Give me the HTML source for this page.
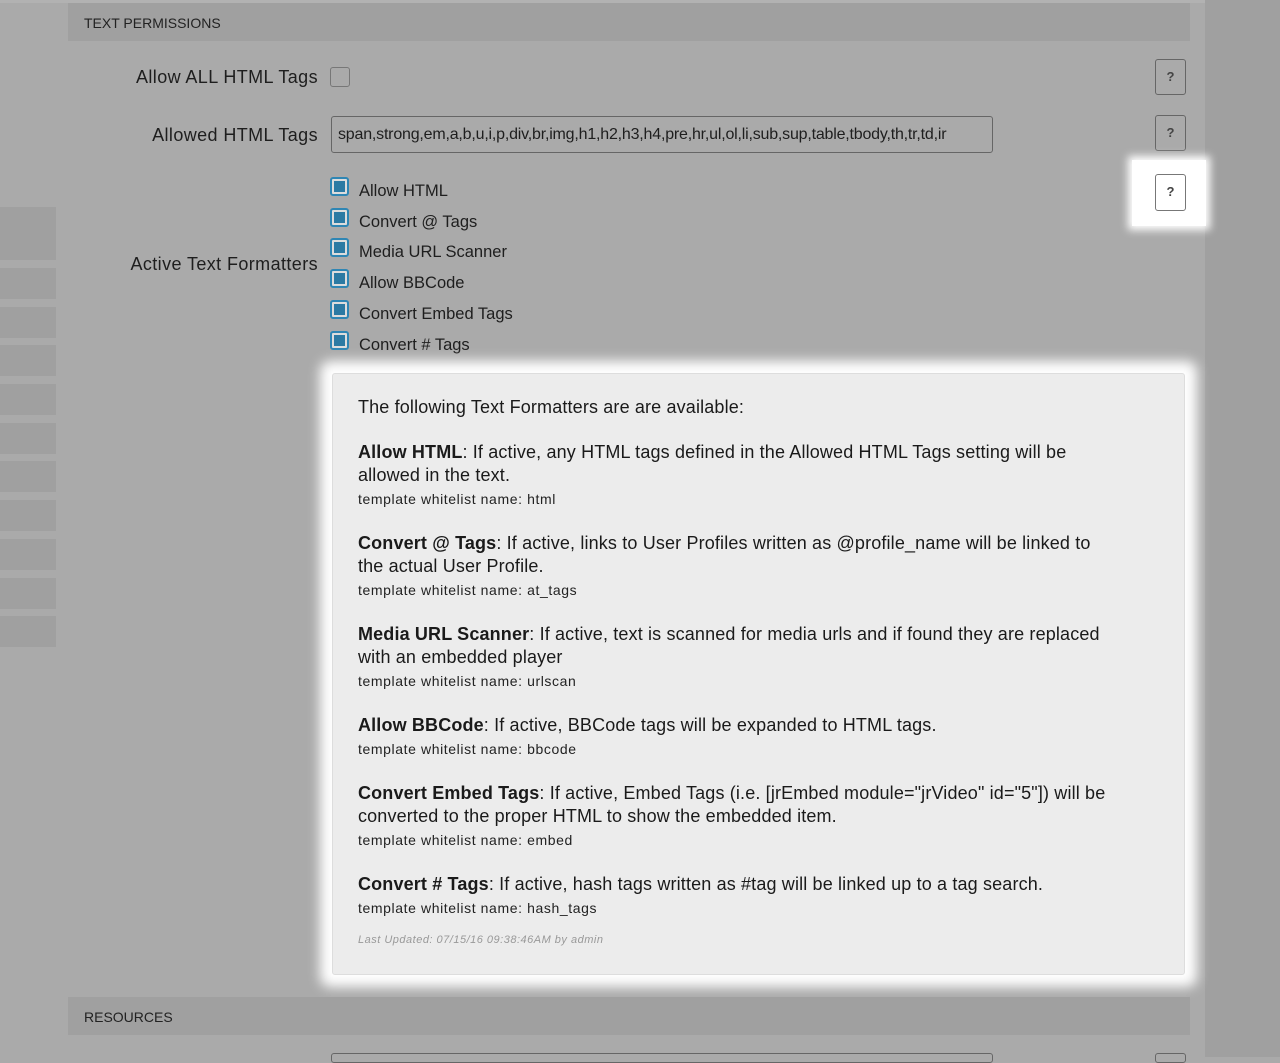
<!DOCTYPE html>
<html><head><meta charset="utf-8"><style>
*{margin:0;padding:0;box-sizing:border-box}
body{width:1280px;height:1057px;background:#aaaaaa;font-family:"Liberation Sans",sans-serif;color:#1e1e1e;position:relative;overflow:hidden}
.a{position:absolute;white-space:nowrap}
.side{position:absolute;left:0;width:56px;background:#a0a0a0}
.hdr{position:absolute;left:68px;width:1122px;height:38px;background:#a0a0a0;font-size:14px;color:#222;padding:12px 0 0 16px}
.lbl{font-size:18px;letter-spacing:0.4px;text-align:right;right:962px}
.help{position:absolute;left:1155px;width:31px;height:36px;border:1px solid #666;border-radius:3px;font-size:13px;font-weight:bold;color:#444;text-align:center;line-height:34px}
.cb{position:absolute;left:330px;width:19px;height:19px;border:2px solid #2f86b4;border-radius:3px;background:#ddd}
.cb::after{content:"";position:absolute;left:2px;top:2px;width:11px;height:11px;background:#2c7aa3}
.cl{left:359px;font-size:16.5px;letter-spacing:0}
.pop{position:absolute;left:332px;top:373px;width:853px;height:602px;background:#ececec;border:1px solid #ddd;border-radius:3px;box-shadow:0 0 12px 12px #fff}
.p{position:absolute;left:358px;font-size:18px;letter-spacing:0.15px;white-space:nowrap;color:#1a1a1a}
.w{position:absolute;left:358px;font-size:14px;letter-spacing:0.6px;white-space:nowrap;color:#222}
</style></head><body>
<div class="a" style="left:0;top:0;width:1280px;height:3px;background:#b2b2b2"></div>
<div class="a" style="left:1205px;top:0;width:75px;height:1057px;background:#a0a0a0"></div>
<div class="side" style="top:207px;height:53px"></div>
<div class="side" style="top:268px;height:31px"></div>
<div class="side" style="top:307px;height:31px"></div>
<div class="side" style="top:345px;height:31px"></div>
<div class="side" style="top:384px;height:31px"></div>
<div class="side" style="top:423px;height:31px"></div>
<div class="side" style="top:461px;height:31px"></div>
<div class="side" style="top:500px;height:31px"></div>
<div class="side" style="top:539px;height:31px"></div>
<div class="side" style="top:578px;height:31px"></div>
<div class="side" style="top:616px;height:31px"></div>
<div class="hdr" style="top:3px">TEXT PERMISSIONS</div>
<div class="a lbl" style="top:67px">Allow ALL HTML Tags</div>
<div class="a" style="left:330px;top:67px;width:20px;height:20px;border:1px solid #777;border-radius:3px;background:#aaa"></div>
<div class="a lbl" style="top:125px">Allowed HTML Tags</div>
<div class="a" style="left:331px;top:116px;width:662px;height:37px;border:1px solid #666;border-radius:3px;font-size:16px;letter-spacing:-0.2px;padding:9px 0 0 6px;overflow:hidden">span,strong,em,a,b,u,i,p,div,br,img,h1,h2,h3,h4,pre,hr,ul,ol,li,sub,sup,table,tbody,th,tr,td,ir</div>
<div class="help" style="top:59px">?</div>
<div class="help" style="top:115px">?</div>
<div class="a" style="left:1132px;top:160px;width:74px;height:66px;background:#fff;box-shadow:0 0 8px 4px #fff"></div>
<div class="help" style="top:174px;height:37px;border-color:#777;background:#fff">?</div>
<div class="a lbl" style="top:254px">Active Text Formatters</div>
<div class="cb" style="top:177px"></div><div class="a cl" style="top:182px">Allow HTML</div>
<div class="cb" style="top:208px"></div><div class="a cl" style="top:213px">Convert @ Tags</div>
<div class="cb" style="top:238px"></div><div class="a cl" style="top:243px">Media URL Scanner</div>
<div class="cb" style="top:269px"></div><div class="a cl" style="top:274px">Allow BBCode</div>
<div class="cb" style="top:300px"></div><div class="a cl" style="top:305px">Convert Embed Tags</div>
<div class="cb" style="top:331px"></div><div class="a cl" style="top:336px">Convert # Tags</div>
<div class="pop"></div>
<div class="p" style="top:397px">The following Text Formatters are are available:</div>
<div class="p" style="top:442px"><b>Allow HTML</b>: If active, any HTML tags defined in the Allowed HTML Tags setting will be</div>
<div class="p" style="top:465px">allowed in the text.</div>
<div class="w" style="top:491px">template whitelist name: html</div>
<div class="p" style="top:533px"><b>Convert @ Tags</b>: If active, links to User Profiles written as @profile_name will be linked to</div>
<div class="p" style="top:556px">the actual User Profile.</div>
<div class="w" style="top:582px">template whitelist name: at_tags</div>
<div class="p" style="top:624px"><b>Media URL Scanner</b>: If active, text is scanned for media urls and if found they are replaced</div>
<div class="p" style="top:647px">with an embedded player</div>
<div class="w" style="top:673px">template whitelist name: urlscan</div>
<div class="p" style="top:715px"><b>Allow BBCode</b>: If active, BBCode tags will be expanded to HTML tags.</div>
<div class="w" style="top:741px">template whitelist name: bbcode</div>
<div class="p" style="top:783px"><b>Convert Embed Tags</b>: If active, Embed Tags (i.e. [jrEmbed module="jrVideo" id="5"]) will be</div>
<div class="p" style="top:806px">converted to the proper HTML to show the embedded item.</div>
<div class="w" style="top:832px">template whitelist name: embed</div>
<div class="p" style="top:874px"><b>Convert # Tags</b>: If active, hash tags written as #tag will be linked up to a tag search.</div>
<div class="w" style="top:900px">template whitelist name: hash_tags</div>
<div class="a" style="left:358px;top:934px;font-size:11px;font-style:italic;color:#999;letter-spacing:0.5px">Last Updated: 07/15/16 09:38:46AM by admin</div>
<div class="hdr" style="top:997px">RESOURCES</div>
<div class="a" style="left:331px;top:1053px;width:662px;height:10px;border:1px solid #666;border-radius:3px"></div>
<div class="a" style="left:1155px;top:1053px;width:31px;height:10px;border:1px solid #666;border-radius:3px"></div>
</body></html>
